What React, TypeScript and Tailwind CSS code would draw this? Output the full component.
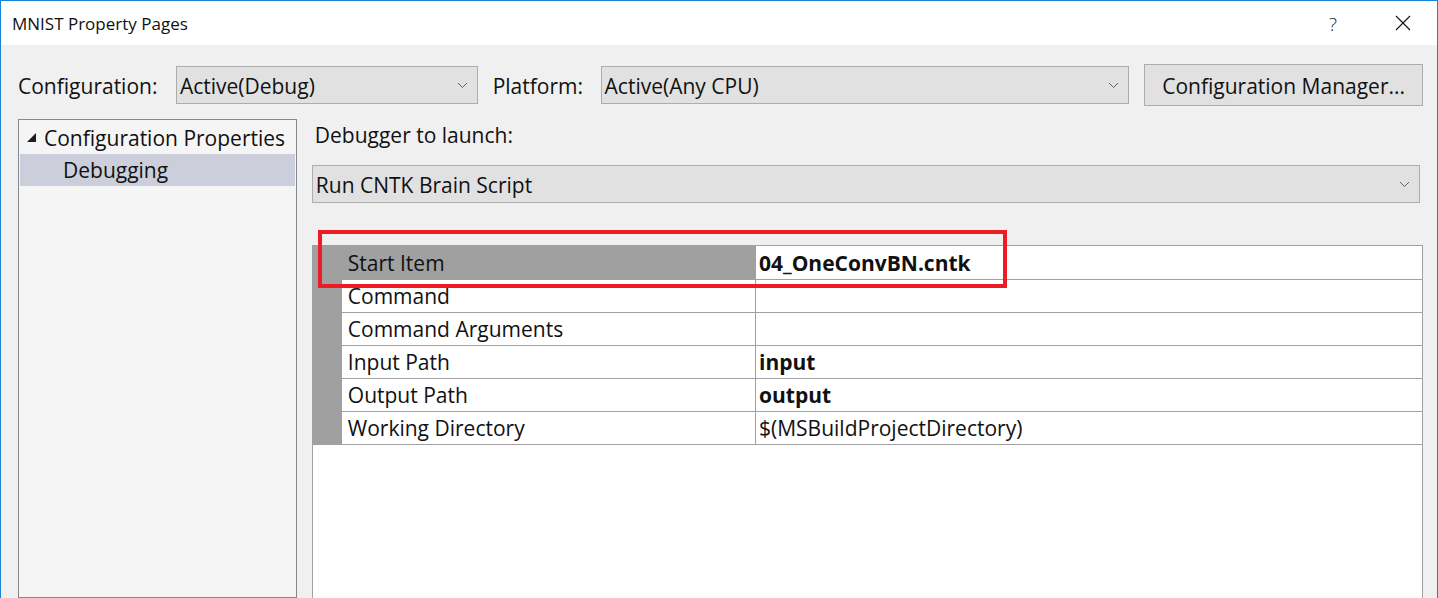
const font = "font-['Open_Sans','Noto_Sans',sans-serif]";

function Chevron({ className }: { className?: string }) {
  return (
    <svg width="11" height="7" viewBox="0 0 11 7" className={className}>
      <polyline points="1,1 5.5,5.5 10,1" fill="none" stroke="#606060" strokeWidth="1" />
    </svg>
  );
}

function Combo({ value, className }: { value: string; className: string }) {
  return (
    <div className={`flex h-[38px] items-center justify-between border border-[#adadad] bg-[#e1e1e1] pl-[3px] pr-[9px] text-[21px] text-[#111] ${className}`}>
      <span className="pt-[3px]">{value}</span>
      <Chevron />
    </div>
  );
}

const rows: { name: string; value?: string; bold?: boolean }[] = [
  { name: "Start Item", value: "04_OneConvBN.cntk", bold: true },
  { name: "Command" },
  { name: "Command Arguments" },
  { name: "Input Path", value: "input", bold: true },
  { name: "Output Path", value: "output", bold: true },
  { name: "Working Directory", value: "$(MSBuildProjectDirectory)" },
];

export default function App() {
  return (
    <div className={`flex h-[598px] w-[1438px] flex-col overflow-hidden border-x border-t border-[#1883d7] bg-[#f0f0f0] text-[#111] ${font}`}>
      {/* title bar */}
      <div className="flex h-[44px] shrink-0 items-center bg-white pl-[11px] pt-[2px] text-[17px]">
        <span className="flex-1">MNIST Property Pages</span>
        <span className="mr-[58px] text-[19px] font-light text-[#222]">?</span>
        <svg width="16" height="16" viewBox="0 0 16 16" className="mr-[26px] -mt-[2px]">
          <path d="M1 1 L15 15 M15 1 L1 15" stroke="#111" strokeWidth="1.1" />
        </svg>
      </div>

      <div className="flex flex-1 flex-col pl-[17px] pr-[14px]">
        {/* configuration row */}
        <div className="mt-[19px] flex h-[42px] items-center text-[21px]">
          <span className="w-[158px] pt-[3px]">Configuration:</span>
          <Combo value="Active(Debug)" className="w-[302px]" />
          <span className="ml-[15px] w-[108px] pt-[3px]">Platform:</span>
          <Combo value="Active(Any CPU)" className="w-[529px]" />
          <div className="ml-[15px] flex h-[42px] w-[279px] items-center justify-center border border-[#adadad] bg-[#e1e1e1] pt-[3px]">
            Configuration Manager...
          </div>
        </div>

        <div className="mt-[13px] flex flex-1 gap-[15px]">
          {/* tree */}
          <div className="w-[279px] border border-[#828790] bg-[#f5f5f5] p-px text-[21px]">
            <div className="flex h-[33px] items-center pl-[7px]">
              <svg width="10" height="10" viewBox="0 0 10 10" className="mr-[7px]">
                <polygon points="9,0 9,9 0,9" fill="#1e1e1e" />
              </svg>
              <span className="pt-[2px]">Configuration Properties</span>
            </div>
            <div className="flex h-[32px] items-center bg-[#cccedb] pl-[43px] pt-[2px]">Debugging</div>
          </div>

          {/* page */}
          <div className="flex w-[1112px] flex-col text-[21px]">
            <div className="flex h-[34px] items-center pl-[3px]">Debugger to launch:</div>
            <Combo value="Run CNTK Brain Script" className="mt-[12px] w-[1108px] pr-[7px]" />

            <div className="relative mt-[42px] flex-1">
              <div className="flex h-full flex-col border-x border-t border-[#a0a0a0] bg-white">
                {rows.map((r, i) => (
                  <div key={r.name} className={`flex ${i === 0 ? "h-[34px]" : "h-[33px]"}`}>
                    <div className={`flex flex-1 ${i === 0 ? "bg-[#a0a0a0]" : ""}`}>
                      <div className="w-[29px] bg-[#a0a0a0]" />
                      <div className="flex w-[414px] items-center border-r border-b border-[#a0a0a0] pl-[6px] pt-[2px]">
                        {r.name}
                      </div>
                    </div>
                    <div className={`flex w-[666px] items-center border-b border-[#a0a0a0] pl-[3px] pt-[2px] ${r.bold ? "font-bold" : ""}`}>
                      {r.value}
                    </div>
                  </div>
                ))}
              </div>
              {/* annotation */}
              <div className="absolute left-[6px] top-[-15px] h-[58px] w-[689px] border-[4px] border-[#ed1c24]" />
            </div>
          </div>
        </div>
      </div>
    </div>
  );
}
